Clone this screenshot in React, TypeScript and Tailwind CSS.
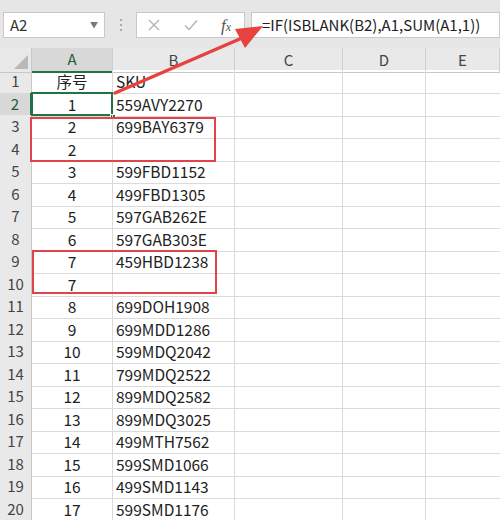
import React from 'react';

const font = { fontFamily: '"Noto Sans CJK SC", "Noto Sans", sans-serif' };

const rows: [string, string][] = [
  ['序号', 'SKU'],
  ['1', '559AVY2270'],
  ['2', '699BAY6379'],
  ['2', ''],
  ['3', '599FBD1152'],
  ['4', '499FBD1305'],
  ['5', '597GAB262E'],
  ['6', '597GAB303E'],
  ['7', '459HBD1238'],
  ['7', ''],
  ['8', '699DOH1908'],
  ['9', '699MDD1286'],
  ['10', '599MDQ2042'],
  ['11', '799MDQ2522'],
  ['12', '899MDQ2582'],
  ['13', '899MDQ3025'],
  ['14', '499MTH7562'],
  ['15', '599SMD1066'],
  ['16', '499SMD1143'],
  ['17', '599SMD1176'],
];

const cols = 'grid grid-cols-[32px_81px_122px_108px_83px_74px]';

export default function App() {
  return (
    <div className="relative w-[500px] h-[520px] overflow-hidden bg-white text-[#222]" style={font}>
      {/* ── Toolbar ─────────────────────── */}
      <div className="h-[48px] bg-[#e6e6e6] flex items-start pt-[12px]">
        <div className="ml-[3px] w-[102px] h-[26px] bg-white border border-[#c9c9c9] flex items-center justify-between pl-[6px] pr-[6px]">
          <span className="text-[15px] text-[#333]">A2</span>
          <span className="text-[8px] text-[#777]">▼</span>
        </div>
        <div className="w-[31px] h-[26px] flex flex-col items-center justify-center gap-[3px]">
          <span className="w-[2px] h-[2px] bg-[#aaa]" />
          <span className="w-[2px] h-[2px] bg-[#aaa]" />
          <span className="w-[2px] h-[2px] bg-[#aaa]" />
        </div>
        <div className="w-[109px] h-[26px] bg-white border border-[#c9c9c9] flex items-center pl-[10px] gap-[22px]">
          <svg width="14" height="14" viewBox="0 0 14 14">
            <path d="M2 2 L12 12 M12 2 L2 12" stroke="#b5b5b5" strokeWidth="1.4" />
          </svg>
          <svg width="16" height="14" viewBox="0 0 16 14">
            <path d="M2 7.5 L6 11.5 L14 2.5" stroke="#b5b5b5" strokeWidth="1.5" fill="none" />
          </svg>
          <span className="text-[17px] italic text-[#555] leading-none" style={{ fontFamily: '"Liberation Serif", serif' }}>
            f<span className="text-[12px]">x</span>
          </span>
        </div>
        <div className="ml-[6px] flex-1 h-[26px] bg-white border border-[#c9c9c9] flex items-center pl-[10px]">
          <span className="text-[15px] text-[#222]">=IF(ISBLANK(B2),A1,SUM(A1,1))</span>
        </div>
      </div>

      {/* ── Column headers ─────────────────────── */}
      <div className={`${cols} h-[22px] bg-[#e9e9e9]`}>
        <div className="relative border-r border-b border-[#c8c8c8]">
          <svg className="absolute right-[3px] bottom-[3px]" width="14" height="14" viewBox="0 0 14 14">
            <path d="M14 0 L14 14 L0 14 Z" fill="#b9b9b9" />
          </svg>
        </div>
        {['A', 'B', 'C', 'D', 'E'].map((c, i) => (
          <div
            key={c}
            className={`flex items-center justify-center text-[15px] border-r border-[#cfcfcf] ${
              i === 0 ? 'bg-[#d8d8d8] border-b-2 border-b-[#217346] text-[#1f5e3a]' : 'border-b border-b-[#c8c8c8] text-[#444]'
            }`}
          >
            {c}
          </div>
        ))}
      </div>

      {/* ── Rows ─────────────────────── */}
      {rows.map(([a, b], i) => (
        <div key={i} className={`${cols} h-[22.5px]`}>
          <div
            className={`flex items-center justify-center text-[15px] border-b border-[#d4d4d4] ${
              i === 1 ? 'bg-[#d8d8d8] border-r-2 border-r-[#217346] text-[#1f5e3a]' : 'bg-[#e9e9e9] border-r border-r-[#c8c8c8] text-[#444]'
            }`}
          >
            {i + 1}
          </div>
          <div className="relative flex items-center justify-center text-[15.5px] border-r border-b border-[#dadada]">
            {a}
            {i === 1 && (
              <>
                <div className="absolute -left-[1px] -top-[1px] w-[82px] h-[24px] border-2 border-[#217346]" />
                <div className="absolute -right-[4px] -bottom-[4px] w-[6px] h-[6px] bg-[#217346] border border-white" />
              </>
            )}
          </div>
          <div className="flex items-center pl-[3px] text-[15.5px] border-r border-b border-[#dadada]">{b}</div>
          <div className="border-r border-b border-[#dadada]" />
          <div className="border-r border-b border-[#dadada]" />
          <div className="border-b border-[#dadada]" />
        </div>
      ))}

      {/* ── Annotations ─────────────────────── */}
      <div className="absolute left-[30px] top-[117px] w-[186px] h-[45px] border-2 border-[#e0444a]" />
      <div className="absolute left-[32px] top-[250px] w-[185px] h-[44px] border-2 border-[#e0444a]" />
      <svg className="absolute left-0 top-0 pointer-events-none" width="500" height="520" viewBox="0 0 500 520">
        <path d="M115 93 L242 38" stroke="#e8423f" strokeWidth="3.5" strokeLinecap="round" />
        <polygon points="263,26 235,29 245,48" fill="#e8423f" />
      </svg>
    </div>
  );
}
